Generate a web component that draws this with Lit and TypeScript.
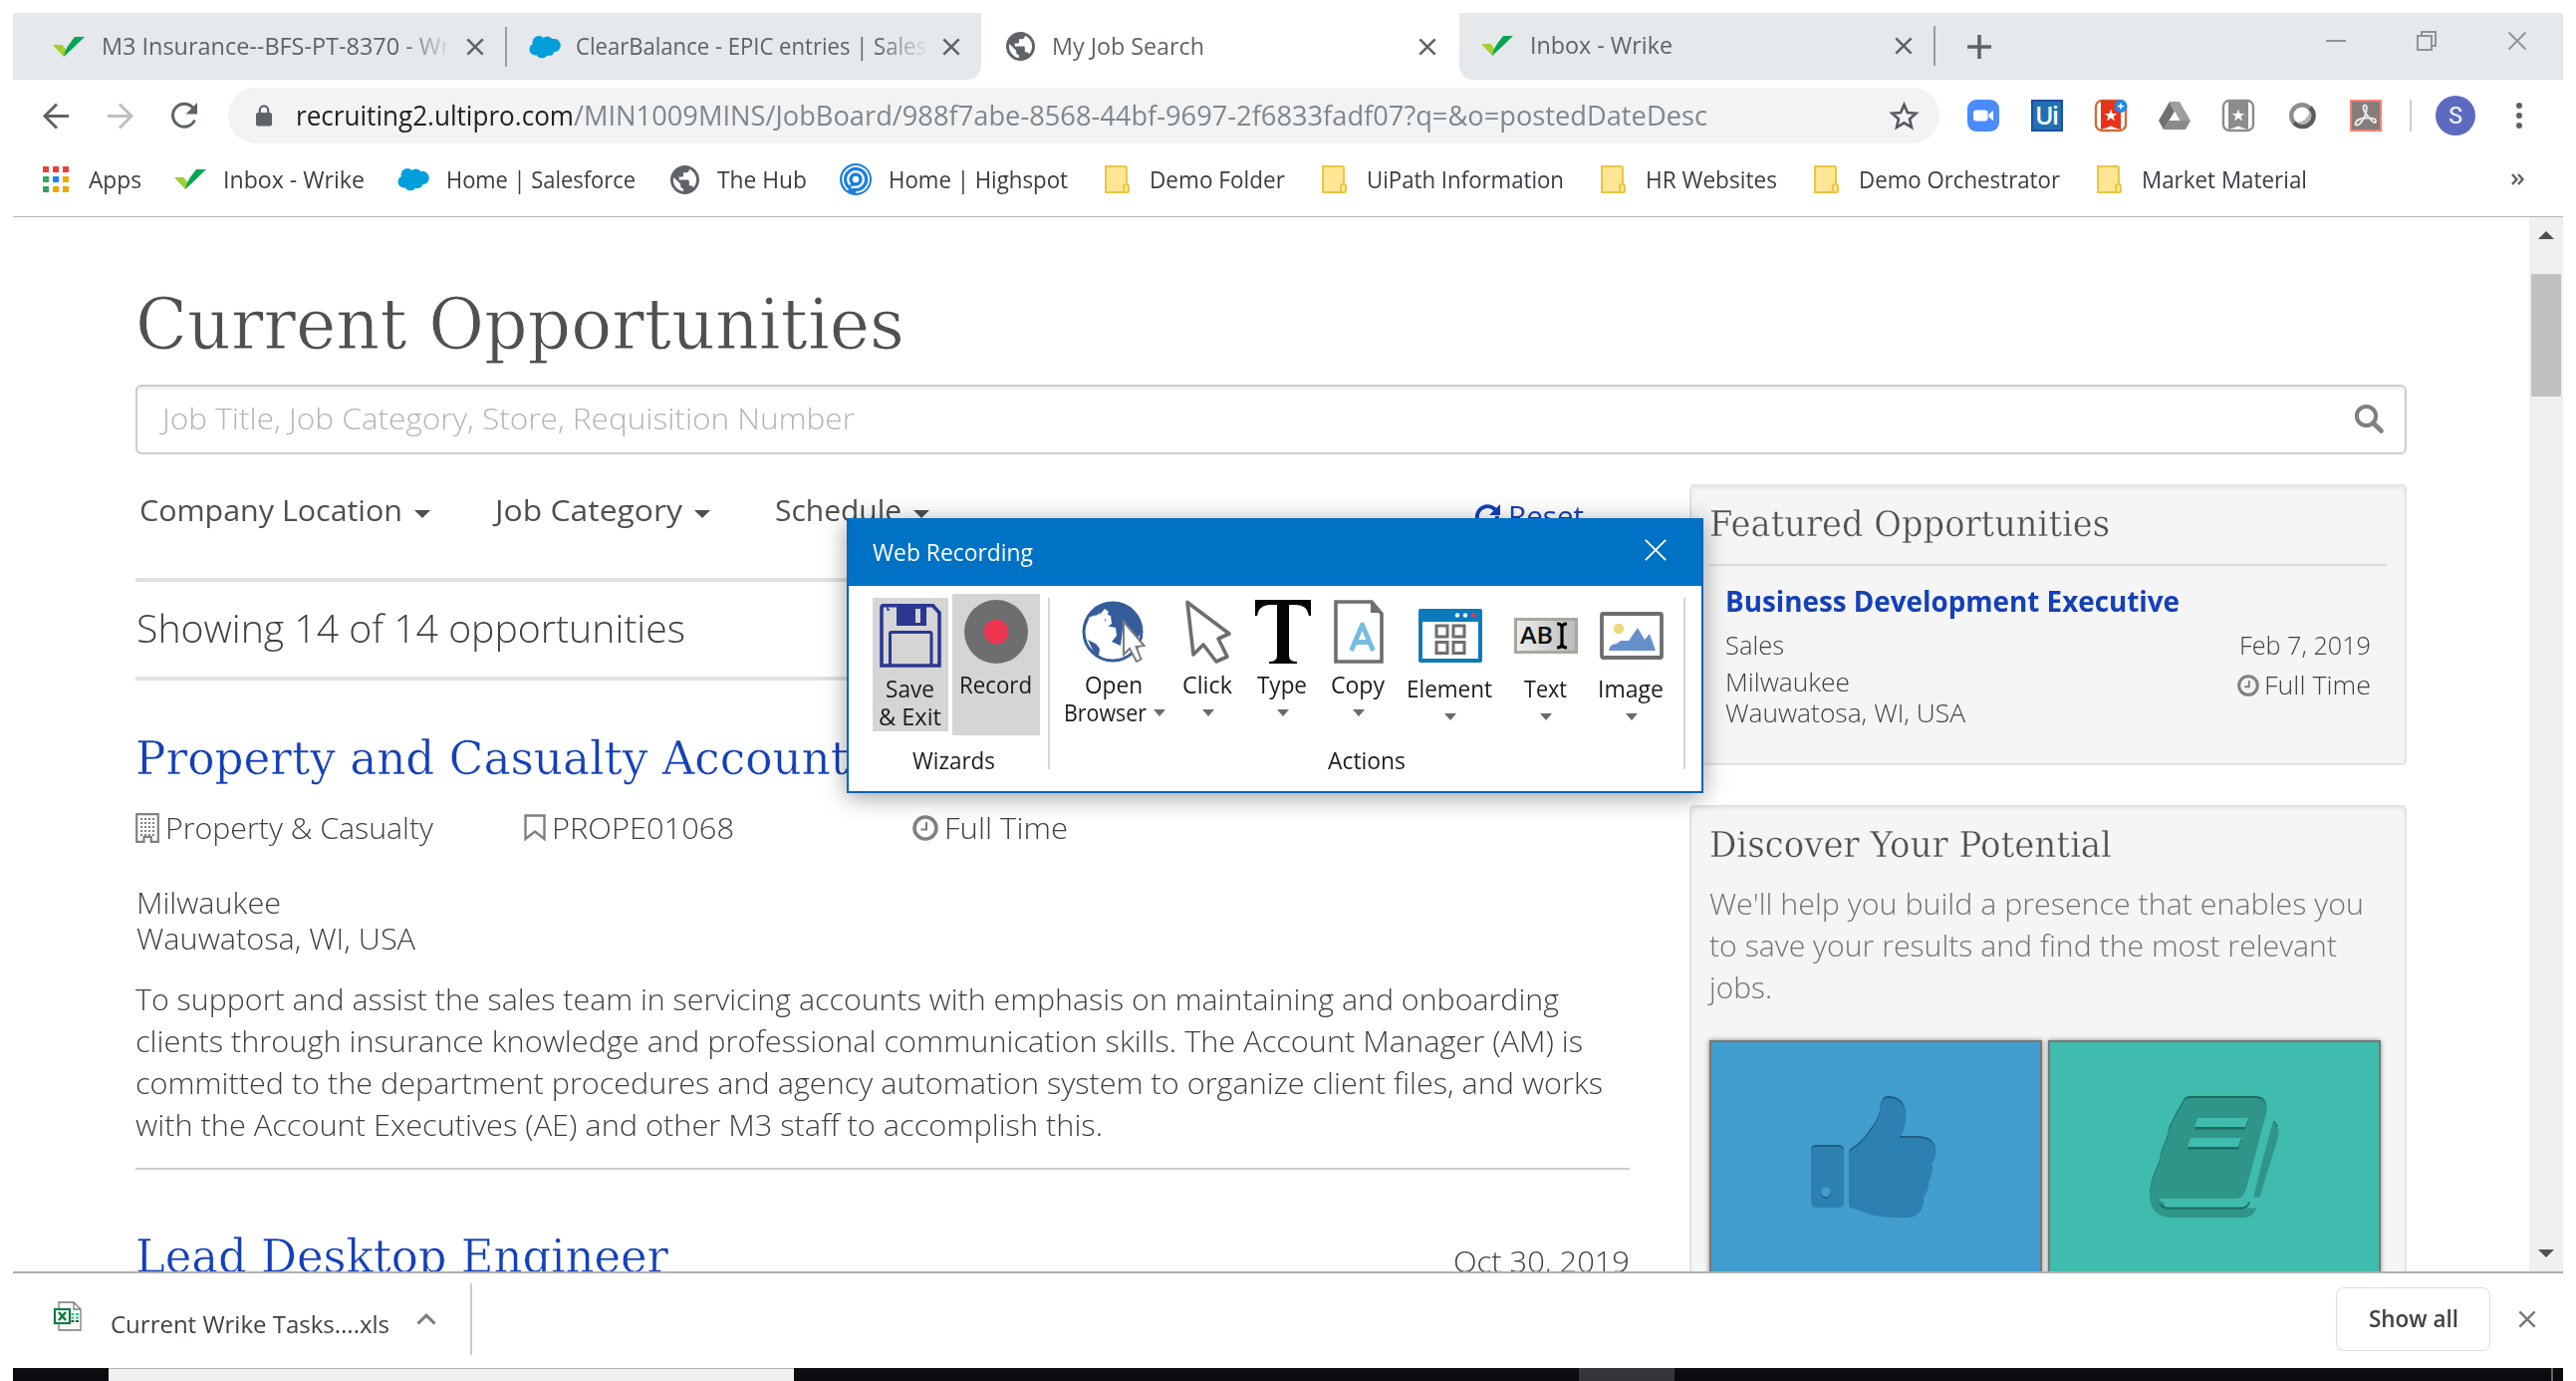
import { LitElement, html, css, svg, nothing } from "lit";
import { customElement } from "lit/decorators.js";
import { styleMap } from "lit/directives/style-map.js";

/* ---------- one line of text condensed or expanded to a set width ---------- */
@customElement("fit-line")
class FitLine extends LitElement {
  static properties = { w: { type: Number } };
  declare w: number;
  static styles = css`
    :host { display: block; white-space: nowrap; flex: none; }
    .line { display: inline-block; transform-origin: 0 50%; white-space: pre; }
  `;
  render() {
    return html`<span class="line"><slot></slot></span>`;
  }
  private fit() {
    const line = this.renderRoot.querySelector<HTMLElement>(".line");
    if (!line) return;
    line.style.transform = "none";
    const natural = line.getBoundingClientRect().width;
    if (natural > 0) line.style.transform = `scaleX(${this.w / natural})`;
    this.style.width = `${this.w}px`;
  }
  updated() {
    this.fit();
    document.fonts.ready.then(() => this.fit());
  }
}

/* ------------------------------- icons ------------------------------- */
const icon = (w: number, h: number, vb: string, body: unknown) =>
  html`<svg width=${w} height=${h} viewBox=${vb} fill="none" style="display:block;flex:none;overflow:visible">${body}</svg>`;

const wrike = () => icon(32, 22, "0 0 32 22", svg`
  <path d="M0 9h9.500l5 6.500L11 21Z" fill="#a4cf30"/><path d="M22 1h10L18 14.500Q15 17 11 21Q12.500 13.500 16 9Z" fill="#00a651"/>`);
const cloud = () => icon(32, 24, "0 0 32 24", svg`
  <g fill="#009edb"><circle cx="10" cy="7.500" r="6.500"/><circle cx="18.500" cy="7" r="5.500"/><circle cx="25" cy="10.500" r="6.800"/><circle cx="6.500" cy="14.500" r="6"/><circle cx="13" cy="17" r="6.300"/><circle cx="20" cy="15.500" r="5.500"/></g>`);
const GLOBE = "M12 2C6.480 2 2 6.480 2 12s4.480 10 10 10 10-4.480 10-10S17.520 2 12 2zm-1 17.930c-3.950-.490-7-3.850-7-7.930 0-.620.080-1.210.210-1.790L9 15v1c0 1.100.9 2 2 2v1.930zm6.900-2.540c-.260-.810-1-1.390-1.900-1.390h-1v-3c0-.550-.450-1-1-1H8v-2h2c.550 0 1-.450 1-1V7h2c1.100 0 2-.9 2-2v-.410c2.930 1.190 5 4.060 5 7.410 0 2.080-.8 3.970-2.100 5.390z";
const globe = () => icon(29, 29, "2 2 20 20", svg`<path d=${GLOBE} fill="#5f6368"/>`);
const highspot = () => icon(32, 32, "0 0 32 32", svg`
  <circle cx="16" cy="16" r="16" fill="#1b7fdc"/>
  <path d="M8.500 26.500a13 13 0 1 1 7.500 2.500" stroke="#fff" stroke-width="1.700"/>
  <path d="M10.500 21.500a7.800 7.800 0 1 1 5.500 2.300h-4.500" stroke="#fff" stroke-width="2.200"/>
  <circle cx="16" cy="16" r="3.200" fill="#fff"/>`);
const folder = () => icon(25, 28, "0 0 25 28", svg`
  <path d="M1 1h19.500q1.500 0 1.500 1.500V19q2 0 2 2v5q0 1-1 1H1Z" fill="#ffe694" stroke="#ecc544" stroke-width="2"/>
  <path d="M19 26v-5q0-2 2-2h1" stroke="#ecc544" stroke-width="2"/>`);
const apps = () => icon(26, 26, "0 0 26 26", svg`
  ${[["#ea4335", "#f33a2c", "#ea4335"], ["#34a853", "#1a82ff", "#f2a600"], ["#34a060", "#f2a600", "#f2a600"]].map(
    (row, r) => row.map((c, i) => svg`<rect x=${i * 10} y=${r * 10} width="6" height="6" fill=${c}/>`))}`);
const cross = (s: number, c: string, w: number) =>
  icon(s, s, "0 0 20 20", svg`<path d="M1.500 1.500l17 17M18.500 1.500l-17 17" stroke=${c} stroke-width=${w}/>`);
const clock = (s: number) => icon(s, s, "0 0 26 26", svg`
  <circle cx="13" cy="13" r="11" stroke="#808080" stroke-width="3.600"/><path d="M14 7v7.500H8.500" stroke="#808080" stroke-width="2.200"/>`);

const back = (c: string, flip = false) => icon(27, 27, "0 0 27 27", svg`
  <path transform=${flip ? "translate(27 0) scale(-1 1)" : ""} d="M26 13.500H3M14 1.500l-12 12 12 12" stroke=${c} stroke-width="3"/>`);
const reload = () => icon(28, 28, "0 0 28 28", svg`
  <path d="M24.500 18.500A11.500 11.500 0 1 1 22.500 6" stroke="#5f6368" stroke-width="3"/><path d="M27 1v11.500H15.500Z" fill="#5f6368"/>`);
const lock = () => icon(18, 22, "0 0 18 22", svg`
  <rect x="1" y="8" width="16" height="13.500" rx="2" fill="#5f6368"/><path d="M4.800 9V5.500a4.200 4.200 0 0 1 8.400 0V9" stroke="#5f6368" stroke-width="2.200"/>`);
const star = () => icon(29, 28, "0 0 29 28", svg`
  <path d="M14.500 3l3.400 8 8.600.7-6.500 5.700 2 8.400-7.500-4.500L7 25.800l2-8.400-6.500-5.700 8.600-.7Z" stroke="#54585d" stroke-width="2.600"/>`);

const extZoom = () => icon(32, 32, "0 0 32 32", svg`
  <rect width="32" height="32" rx="9" fill="#4a8cff"/><rect x="6" y="10.500" width="14.500" height="11" rx="3" fill="#fff"/><path d="M21.500 14.500l4.500-3.500v10l-4.500-3.500Z" fill="#fff"/>`);
const extUi = () => icon(32, 32, "0 0 32 32", svg`
  <rect x="1" y="1" width="30" height="30" fill="#2070b4" stroke="#1e4fa0" stroke-width="2"/>
  <text x="16" y="25" text-anchor="middle" font-family="Open Sans, sans-serif" font-weight="600" font-size="25" textLength="24" fill="#fff">Ui</text>`);
const STAR = "M16 9.500l1.600 4.400h4.700l-3.700 2.800 1.300 4.500-3.900-2.700-3.900 2.700 1.300-4.500-3.700-2.800h4.700Z";
const extStar = (edge: string, fill: string, plus: boolean) => icon(33, 32, "0 0 33 32", svg`
  <rect x="1" y="1" width="30" height="30" rx="6" fill="#fff" stroke=${edge} stroke-width="2.400"/>
  <path d="M6 1h20v29l-5-1.500-5-2-5 2L6 30Z" fill=${fill}/><path d=${STAR} fill="#fff"/>
  ${plus ? svg`<circle cx="26" cy="6.500" r="6.500" fill="#1e88e5"/><path d="M26 3.500v6M23 6.500h6" stroke="#fff" stroke-width="1.400"/>` : nothing}`);
const extDrive = () => icon(32, 28, "0 0 32 28", svg`
  <path d="M11 0L0 19l5 9 11-18Z" fill="#707070"/><path d="M11 0h10l11 19H21Z" fill="#9e9e9e"/><path d="M10.500 19H32l-5 9H5Z" fill="#8b8b8b"/><path d="M16 10l5.500 9h-11Z" fill="#fff"/>`);
const extRing = () => icon(28, 28, "0 0 28 28", svg`
  <circle cx="14" cy="14" r="10.800" stroke="#8d8d8d" stroke-width="4.400"/><path d="M22 6a11 11 0 1 1-16 15" stroke="#5c5c5c" stroke-width="4.400"/>
  <path d="M22 9a9 9 0 0 1-13 12q10-1 13-12Z" fill="#b5b5b5"/>`);
const extPdf = () => icon(32, 32, "0 0 32 32", svg`
  <rect x="1" y="1" width="30" height="30" fill="#857d7c" stroke="#fb8072" stroke-width="2"/>
  <path d="M14.500 17.500Q18 9 16.500 6.500T13.500 7Q13 11 19.500 18.500T26 21.500Q26.500 18 16 18.500T5.500 25Q9 28 14.500 17.500Z" stroke="#eee" stroke-width="1.800"/>`);
const excel = () => icon(28, 30, "0 0 28 30", svg`
  <path d="M5 1h15l7 7v21H5Z" fill="#fff" stroke="#7a7a7a" stroke-width="1.300"/><path d="M20 1v7h7" stroke="#7a7a7a" stroke-width="1.300"/>
  <rect x="1" y="8" width="15" height="14" fill="#fff" stroke="#107c41" stroke-width="2.200"/><path d="M5 11l7 8M12 11l-7 8" stroke="#107c41" stroke-width="2.600"/>
  <path d="M17.500 13h3m1.500 0h3M17.500 16.500h3m1.500 0h3" stroke="#33c481" stroke-width="2"/><path d="M17.500 20h3m1.500 0h3" stroke="#185c37" stroke-width="2"/>`);

const magnifier = () => icon(30, 30, "0 0 30 30", svg`
  <circle cx="12.500" cy="12.500" r="9.600" stroke="#808080" stroke-width="4"/><path d="M19.500 19.500l8 8" stroke="#808080" stroke-width="4.600" stroke-linecap="round"/>`);
const refresh = () => icon(27, 26, "0 0 27 26", svg`
  <path d="M3 15A10.500 10.500 0 0 1 21 6.500" stroke="#1440b8" stroke-width="4"/><path d="M26 1v11H15Z" fill="#1440b8"/><path d="M23 13a10.500 10.500 0 0 1-18 7" stroke="#1440b8" stroke-width="4"/>`);
const building = () => icon(24, 30, "0 0 24 30", svg`
  <path d="M1.200 1.200h21.600v27.600h-7V24H8.500v4.800H1.200Z" stroke="#808080" stroke-width="2.200"/>
  ${[5, 9, 13, 17, 21].map((y) => [5, 9, 13, 17].map((x) => svg`<rect x=${x} y=${y} width="2" height="2" fill="#808080"/>`))}`);
const bookmark = () => icon(22, 27, "0 0 22 27", svg`<path d="M1.500 1.500h19v23.500L11 17.500 1.500 25Z" stroke="#808080" stroke-width="2.400"/>`);

const THUMB = "M38 57q0-4 4-6 8-4 16-16 8-9 11-20 1-15 8-15 18 0 18 19 0 12-6 21h19q17 1 17 15 0 7-4 11 2 10-3 18 1 9-5 15 1 21-18 21H82q-18 0-33-7-5-2-8-2-3-1-3-4Z";
const thumb = () => icon(127, 124, "0 -1 127 124", svg`
  <g fill="#215d80" transform="translate(0 -1)"><path d=${THUMB}/><rect y="49" width="33" height="60" rx="5"/></g>
  <g fill="#2d81b0" transform="translate(0 1)"><path d=${THUMB}/><rect y="49" width="33" height="61" rx="5"/></g>
  <circle cx="15" cy="97" r="5" fill="#215d80"/><circle cx="15" cy="95.500" r="4.800" fill="#419ecf"/>`);
const COVER = "M34 4q1-4 7-4h66q12 1 10 15L97 91q-3 10-11 10H12L0 96l2-12 8-20 1-7 7-18 1-7 8-16Z";
const book = () => icon(131, 124, "0 -1 131 124", svg`
  <path d="M123 25q8 4 6 15l-22 72q-4 9-12 9H20Q-1 119 0 96l4-10 120-61Z" fill="#2f9588"/>
  <path d="M124 24q3 2 4 6" stroke="#1f6a60" stroke-width="1.500"/>
  <path d="M120 12L99 99q-2 7-9 7H15l100 0" stroke="#3fbcad" stroke-width="11"/>
  <path d="M10 107q3 4.500 8 4.500h74q6 0 8-6" stroke="#1f6a60" stroke-width="1.800"/>
  <path d="M112 0q12 1 12 24L103 100l-7 6H20Q8 106 10 101h76Z" fill="#3fbcad"/>
  <path d=${COVER} fill="#1f6a60" transform="translate(0 -1)"/><path d=${COVER} fill="#2f9588" transform="translate(0 1)"/>
  <g fill="#1f6a60" transform="translate(0 1.500)"><path d="M48 21h51l-3 10H45Z"/><path d="M41 41h51l-3 10H38Z"/></g>
  <g fill="#3fbcad"><path d="M48 21h51l-3 9H45Z"/><path d="M41 41h51l-3 9H38Z"/></g>`);

const floppy = () => icon(62, 64, "0 0 62 64", svg`
  <path d="M3 1.700h50.500L60 9v53H2V3Z" stroke="#2a3890" stroke-width="3.600"/><path d="M17 2h30v20H17Z" fill="#2a3890"/><rect x="36" y="5" width="5" height="14" fill="#d5d5d5"/>
  <path d="M10.500 62V30q0-1.500 1.500-1.500h38.500q1.500 0 1.500 1.500v32" stroke="#2a3890" stroke-width="3"/><path d="M8 2v4h2" stroke="#2a3890" stroke-width="1.500"/>`);
const record = () => icon(64, 64, "0 0 64 64", svg`<circle cx="32" cy="32" r="32" fill="#6d6e70"/><circle cx="32" cy="32" r="12.300" fill="#ee3650"/>`);
const openBrowser = () => icon(64, 64, "0 0 64 64", svg`
  <circle cx="31" cy="32" r="29" fill="#fff" stroke="#355d9c" stroke-width="3"/>
  <path d="M8 16Q16 2 31 2q18 1 26 15l3 14-4 8-5-6-9-11-3 24-9-4 5-6-1-8-10-2-1-6 4-8-4-3-5 6-7 1-6 3-1 9-2 5Z" fill="#355d9c"/>
  <path d="M6 40l8 4 4 5-1 7 6 5-9-4Z" fill="#355d9c"/>
  <path d="M13 18l5-5 1 4-4 5ZM23 14l6 2 1 8-7 5-3-3 4-5Z" fill="#fff"/>
  <path d="M42 22v33l6-6 7 13 4.500-2.500-5-12.500 8-1Z" fill="#fff" stroke="#7c7d80" stroke-width="2"/>`);
const click = () => icon(48, 64, "0 0 48 64", svg`
  <path d="M3 2.500L9 55l10-10 13 17 11-5-9-18 11-5Z" stroke="#6d6e70" stroke-width="3.600" stroke-linejoin="round" fill="#fff"/>`);
const typeT = () => icon(56, 64, "0 0 56 64", svg`
  <path d="M0 0h56v16h-2q-2-11-13-11h-7v51q0 6 8 6v2H14v-2q8 0 8-6V5h-7Q4 5 2 16H0Z" fill="#050505"/>`);
const copy = () => icon(50, 64, "0 0 50 64", svg`
  <path d="M2 2h36l10 12v48H2Z" fill="#fff" stroke="#6d6e70" stroke-width="3.600"/><path d="M37 1v12h12Z" fill="#6d6e70"/>
  <path d="M17.500 51L28.500 25l11 26M21.500 42.500h14" stroke="#74bce0" stroke-width="4.800" stroke-linejoin="round"/>`);
const element = () => icon(64, 54, "0 0 64 54", svg`
  <rect width="64" height="54" rx="2" fill="#0c7bbb"/><rect x="4" y="13" width="56" height="37" fill="#fff"/>
  <circle cx="39" cy="6.500" r="2.200" fill="#fff"/><circle cx="47" cy="6.500" r="2.200" fill="#fff"/><circle cx="55" cy="6.500" r="2.300" fill="#ee3650"/>
  ${[[18, 17], [35, 17], [18, 33.500], [35, 33.500]].map(([x, y]) => svg`<rect x=${x} y=${y} width="11" height="11" stroke="#6d6e70" stroke-width="3"/>`)}`);
const textIcon = () => icon(64, 36, "0 0 64 36", svg`
  <defs><linearGradient id="tg"><stop offset="0" stop-color="#eee"/><stop offset="1" stop-color="#bbb"/></linearGradient></defs>
  <rect x="1.500" y="1.500" width="61" height="33" fill="url(#tg)" stroke="#a8a79d" stroke-width="3"/>
  <text x="6" y="26" font-family="Open Sans, sans-serif" font-weight="600" font-size="24" textLength="33" lengthAdjust="spacingAndGlyphs" fill="#111">AB</text>
  <path d="M43 6q5 0 5 4v16q0 4-5 4M53 6q-5 0-5 4v16q0 4 5 4" stroke="#050505" stroke-width="3.200"/>`);
const image = () => icon(64, 48, "0 0 64 48", svg`
  <rect x="2" y="2" width="60" height="44" rx="1.500" fill="#fff" stroke="#6d6e70" stroke-width="3.800"/>
  <circle cx="19" cy="17" r="5.200" fill="#ecd97c"/><path d="M9 39q1-7 8-7l4-3h8l9-13 7 12 5-6 6 17Z" fill="#6690ca"/>`);

/* ------------------------------- data ------------------------------- */
const bookmarks: [() => unknown, string, number][] = [
  [apps, "Apps", 53], [wrike, "Inbox - Wrike", 142], [cloud, "Home | Salesforce", 190], [globe, "The Hub", 90],
  [highspot, "Home | Highspot", 180], [folder, "Demo Folder", 136], [folder, "UiPath Information", 198],
  [folder, "HR Websites", 132], [folder, "Demo Orchestrator", 202], [folder, "Market Material", 166],
];
const description: [string, number][] = [
  ["To support and assist the sales team in servicing accounts with emphasis on maintaining and onboarding", 1429],
  ["clients through insurance knowledge and professional communication skills. The Account Manager (AM) is", 1453],
  ["committed to the department procedures and agency automation system to organize client files, and works", 1473],
  ["with the Account Executives (AE) and other M3 staff to accomplish this.", 971],
];
interface Action { icon: () => unknown; label: [string, number]; second?: [string, number]; col: number; low?: boolean }
const actions: Action[] = [
  { icon: openBrowser, label: ["Open", 58], second: ["Browser", 83], col: 106 },
  { icon: click, label: ["Click", 50], col: 82 },
  { icon: typeT, label: ["Type", 50], col: 68 },
  { icon: copy, label: ["Copy", 54], col: 84 },
  { icon: element, label: ["Element", 86], col: 100, low: true },
  { icon: textIcon, label: ["Text", 43], col: 92, low: true },
  { icon: image, label: ["Image", 66], col: 80, low: true },
];

/* ----------------------------- recorder ----------------------------- */
@customElement("web-recorder")
class WebRecorder extends LitElement {
  static styles = css`
    :host {
      display: block; box-sizing: border-box; width: 860px; height: 276px; background: #fff;
      border: 2px solid #0066b4; border-top: 0; box-shadow: 0 4px 22px rgba(0, 0, 0, 0.38);
      font: 23px/28px "Open Sans", "Noto Sans", sans-serif; color: #1c1c1c;
    }
    .title { height: 68px; box-sizing: border-box; background: #0072c6; color: #fff; display: flex; align-items: center; justify-content: space-between; padding: 0 34px 4px 24px; font-size: 23.500px; }
    .title fit-line { padding-top: 3px; }
    .body { display: flex; padding-top: 8px; }
    .group { display: flex; flex-direction: column; }
    .tools { display: flex; height: 142px; }
    .wizards { padding: 0 8px 0 24px; gap: 4px; }
    .caption { display: flex; justify-content: center; height: 28px; margin-top: 11px; }
    .w { padding-left: 11px; }
    .divider { width: 2px; height: 172px; background: #d4d4d4; margin-top: 4px; }
    .big { background: #d5d5d5; display: flex; flex-direction: column; align-items: center; box-sizing: border-box; }
    .save { width: 76px; height: 134px; margin-top: 4px; padding-top: 6px; }
    .record { width: 88px; height: 142px; padding-top: 6px; }
    .big fit-line:first-of-type { margin-top: 7px; }
    .big fit-line, .action fit-line { position: relative; left: -1px; }
    .actions { padding-left: 12px; padding-right: 12px; }
    .action { display: flex; flex-direction: column; align-items: center; padding-top: 6px; flex: none; box-sizing: border-box; }
    .action:first-child .pic { margin-left: -2px; }
    .pic { height: 64px; display: flex; align-items: center; justify-content: center; margin-bottom: 7px; }
    .low .pic { align-items: center; padding-top: 4px; }
    .second { display: flex; align-items: center; gap: 6px; height: 28px; }
    .caret { width: 0; border: 6px solid transparent; border-top: 7px solid #6a6a6a; border-bottom: 0; }
  `;
  render() {
    return html`
      <div class="title"><fit-line w="161">Web Recording</fit-line>${cross(24, "#fff", 1.5)}</div>
      <div class="body">
        <div class="group">
          <div class="tools wizards">
            <div class="big save">${floppy()}<fit-line w="49">Save</fit-line><fit-line w="63">&amp; Exit</fit-line></div>
            <div class="big record">${record()}<fit-line w="73">Record</fit-line></div>
          </div>
          <div class="caption w"><fit-line w="83">Wizards</fit-line></div>
        </div>
        <div class="divider"></div>
        <div class="group">
          <div class="tools actions">
            ${actions.map((a) => html`
              <div class="action ${a.low ? "low" : ""}" style=${styleMap({ width: `${a.col}px` })}>
                <div class="pic">${a.icon()}</div>
                <fit-line w=${a.label[1]}>${a.label[0]}</fit-line>
                <div class="second">${a.second ? html`<fit-line w=${a.second[1]}>${a.second[0]}</fit-line>` : nothing}<span class="caret"></span></div>
              </div>`)}
          </div>
          <div class="caption"><fit-line w="78">Actions</fit-line></div>
        </div>
        <div class="divider"></div>
      </div>`;
  }
}

/* ------------------------------- page ------------------------------- */
@customElement("app-root")
class AppRoot extends LitElement {
  static styles = css`
    :host { display: block; width: 2586px; height: 1386px; overflow: hidden; background: #fff; font-family: "Open Sans", "Noto Sans", sans-serif; }
    * { box-sizing: border-box; }
    .frame { position: relative; display: flex; flex-direction: column; height: 1386px; padding: 13px 13px 0; }
    .row { display: flex; align-items: center; }

    .tabs { display: flex; height: 67px; background: #e5e9ec; color: #5f6367; font-size: 23.500px; flex: none; }
    .tab { display: flex; align-items: center; height: 67px; }
    .tab .name { overflow: hidden; padding-bottom: 2px; }
    .fade { -webkit-mask-image: linear-gradient(90deg, #000 86%, transparent 101%); mask-image: linear-gradient(90deg, #000 86%, transparent 101%); }
    .t1 { width: 496px; padding-left: 40px; border-right: 2px solid #9a9da0; height: 40px; }
    .t2 { width: 476px; padding: 0 21px 0 22px; }
    .t3 { width: 480px; background: #fff; padding: 0 23px 0 25px; border-radius: 16px 16px 0 0; }
    .t4 { width: 478px; padding: 0 21px 0 22px; border-right: 2px solid #9a9da0; height: 40px; margin-top: 13px; }
    .t1 .name { margin-left: 17px; } .t1 svg:last-child { margin-left: 16px; }
    .t2 .name { margin: 0 16px 0 15px; }
    .t3 .name, .t4 .name { margin-left: 17px; flex: 1; }
    .plus { display: flex; align-items: center; margin-left: 32px; }
    .win { margin-left: auto; display: flex; gap: 71px; padding: 18px 36px 0 0; }
    .wrap { display: flex; background: #fff; }
    .rest { flex: 1; }
    .left { background: #e5e9ec; border-radius: 0 0 14px 0; }
    .right { background: #e5e9ec; border-radius: 0 0 0 14px; flex: 1; display: flex; }

    .bar { height: 71px; flex: none; padding: 8px 0 0 30px; color: #80868b; align-items: flex-start; }
    .nav { display: flex; gap: 37px; align-items: center; width: 186px; height: 56px; }
    .omni { width: 1718px; height: 56px; border-radius: 28px; background: #f1f3f4; display: flex; align-items: center; padding: 0 21px 0 27px; font-size: 27px; }
    .omni fit-line { padding-bottom: 1px; }
    .omni .host { color: #202124; margin-left: 23px; }
    .omni svg:last-child { margin-left: auto; }
    .ext { display: flex; align-items: center; gap: 32px; margin-left: 28px; height: 56px; }
    .cell { width: 32px; display: flex; justify-content: center; flex: none; }
    .sep { width: 2px; height: 32px; background: #ccc; margin: 0 -4px 0 -4px; }
    .avatar { width: 40px; height: 40px; border-radius: 50%; background: #5c6bc0; color: #fff; display: flex; align-items: center; justify-content: center; font: 23px Roboto, sans-serif; margin-left: -4px; flex: none; }
    .dots { display: flex; flex-direction: column; gap: 4px; margin-left: 9px; }
    .dots i { width: 6px; height: 6px; border-radius: 50%; background: #5f6368; }

    .marks { height: 67px; padding: 13px 39px 0 27px; gap: 33px; font-size: 23.500px; color: #3a3d41; flex: none; border-bottom: 1px solid #b4b4b4; align-items: flex-start; }
    .mark { display: flex; gap: 17px; align-items: center; height: 32px; }
    .mark .cell { height: 32px; align-items: center; }
    .mark fit-line { padding-bottom: 1px; }
    .more { margin-left: auto; height: 32px; display: flex; align-items: center; }

    .view { height: 1058px; display: flex; overflow: hidden; flex: none; }
    .page { width: 2526px; padding-left: 123px; color: #3f3f3f; font-size: 28.500px; font-weight: 300; }
    .scroll { width: 34px; background: #f0f0f0; display: flex; flex-direction: column; align-items: center; padding: 14px 0; }
    .up, .down { width: 0; border: 8px solid transparent; }
    .up { border-bottom-color: #505050; border-top: 0; }
    .down { border-top-color: #505050; border-bottom: 0; margin-top: auto; }
    .thumb { width: 30px; height: 123px; background: #c1c1c1; margin-top: 35px; }

    .slab { font-family: "DejaVu Serif", serif; font-weight: 400; }
    h1, h2, h3, p { margin: 0; font-weight: inherit; }
    h1.slab { font-size: 71px; line-height: 121px; padding-top: 47px; height: 168px; color: #505050; -webkit-text-stroke: 0.900px #fff; }
    .search { width: 2280px; height: 70px; border: 2px solid #ccc; border-radius: 6px; box-shadow: inset 0 2px 3px rgba(0, 0, 0, 0.08); display: flex; align-items: center; justify-content: space-between; padding: 0 21px 3px 25px; color: #b4b4b4; }
    .columns { display: flex; gap: 60px; }
    .main { width: 1500px; }
    .filters { height: 112px; display: flex; align-items: center; padding-left: 4px; font-weight: 400; color: #4f4f4f; }
    .filters .caret { width: 0; border: 8px solid transparent; border-top: 8px solid #4f4f4f; border-bottom: 0; margin: 7px 65px 0 12px; }
    .reset { display: flex; align-items: center; gap: 7px; margin-left: auto; color: #1440b8; padding: 12px 46px 0 0; }
    .count { height: 103px; margin-top: 12px; border: solid #e1e1e1; border-width: 4px 0; font-size: 38px; display: flex; align-items: center; padding: 0 0 3px 1px; }
    .job h2 { color: #1440b8; font-size: 46.500px; line-height: 43px; margin-top: 57px; -webkit-text-stroke: 0.500px #fff; }
    .meta { display: grid; grid-template-columns: 390px 390px 1fr; height: 95px; align-items: center; }
    .meta .row { gap: 6px; }
    .place { line-height: 36px; margin: 10px 0 22px 1px; }
    .desc { line-height: 42px; padding-bottom: 22px; border-bottom: 2px solid #ccc; }
    .next { display: flex; justify-content: space-between; align-items: center; height: 43px; margin-top: 66px; }
    .job .next h2 { margin: 0; }
    .next .date { padding-top: 9px; }

    .side { width: 720px; padding-top: 30px; }
    .card { background: #f5f5f5; border: 2px solid #e3e3e3; border-radius: 5px; box-shadow: inset 0 2px 3px rgba(0, 0, 0, 0.05); padding: 0 18px; }
    .card h3 { height: 76px; line-height: 76px; font-size: 34.500px; -webkit-text-stroke: 0.400px #f5f5f5; color: #505050; }
    .featured { height: 282px; margin-bottom: 40px; }
    .featured h3 { height: 80px; border-bottom: 2px solid #dcdcdc; }
    .post { padding: 7px 16px 0 16px; font-size: 25px; line-height: 31px; }
    .post .name { font-size: 28.500px; line-height: 57px; font-weight: 700; color: #1440b8; }
    .post .cols { display: flex; justify-content: space-between; }
    .gap { margin-bottom: 6px; }
    .right-col { display: flex; flex-direction: column; align-items: flex-end; gap: 9px; }
    .right-col .row { gap: 5px; }
    .discover { height: 700px; }
    .discover p { line-height: 42px; color: #727272; }
    .tiles { display: flex; gap: 6px; margin-top: 32px; }
    .tile { width: 334px; height: 300px; border: 2px solid #777; box-shadow: 0 0 5px rgba(0, 0, 0, 0.45); padding: 54px 0 0 100px; }
    .blue { background: #419ecf; } .teal { background: #3fbcad; }

    .shelf { height: 97px; flex: none; border-top: 2px solid #b0b0b0; display: flex; align-items: center; padding: 0 27px 3px 41px; font-size: 24px; color: #3e4145; }
    .shelf .file { margin: 8px 27px 0 29px; }
    .shelf .rule { width: 2px; height: 72px; background: #ccc; margin: 0 auto 0 34px; }
    .shelf .xls { margin-bottom: 6px; }
    .all { width: 155px; height: 64px; border: 1.500px solid #dadce0; border-radius: 8px; display: flex; align-items: center; justify-content: center; font-weight: 600; margin-right: 28px; font-size: 23px; padding-bottom: 2px; }
    .task { height: 13px; display: flex; flex: none; background: #0a0c10; }
    .task i { display: block; height: 13px; }
    .k1 { width: 96px; } .k2 { width: 688px; background: #f0f0f0; border-top: 1px solid #b4b4b4; } .k3 { width: 788px; } .k4 { width: 96px; background: #33353a; } .k5 { width: 882px; border-right: 2px solid #666; }

    .recorder { position: absolute; left: 850px; top: 520px; }
  `;

  render() {
    const grey = "#5f6368";
    return html`
      <div class="frame">
        <div class="tabs">
          <div class="wrap">
            <div class="left row">
              <div class="tab t1">${wrike()}<div class="name fade"><fit-line w="350">M3 Insurance--BFS-PT-8370 - Wr</fit-line></div>${cross(18, grey, 2.9)}</div>
              <div class="tab t2">${cloud()}<div class="name fade"><fit-line w="352">ClearBalance - EPIC entries | Sales</fit-line></div>${cross(18, grey, 2.9)}</div>
            </div>
            <div class="tab t3">${globe()}<div class="name"><fit-line w="153">My Job Search</fit-line></div>${cross(18, grey, 2.9)}</div>
          </div>
          <div class="wrap rest">
            <div class="right">
              <div class="tab t4">${wrike()}<div class="name"><fit-line w="143">Inbox - Wrike</fit-line></div>${cross(18, grey, 2.9)}</div>
              <div class="plus">${icon(24, 24, "0 0 24 24", svg`<path d="M12 0v24M0 12h24" stroke="#5f6368" stroke-width="3.600"/>`)}</div>
              <div class="win">
                ${icon(20, 20, "0 0 20 20", svg`<path d="M0 10h20" stroke="#909396" stroke-width="2"/>`)}
                ${icon(20, 20, "0 0 20 20", svg`<path d="M1 5h14v14H1ZM5 5V1h14v14h-4" stroke="#909396" stroke-width="2"/>`)}
                ${cross(20, "#909396", 1.8)}
              </div>
            </div>
          </div>
        </div>

        <div class="row bar">
          <div class="nav">${back(grey)}${back("#bdbfc2", true)}${reload()}</div>
          <div class="omni">${lock()}<fit-line class="host" w="279">recruiting2.ultipro.com</fit-line><fit-line w="1138">/MIN1009MINS/JobBoard/988f7abe-8568-44bf-9697-2f6833fadf07?q=&amp;o=postedDateDesc</fit-line>${star()}</div>
          <div class="ext">
            ${extZoom()}${extUi()}<div class="cell">${extStar("#c8703a", "#e8321c", true)}</div>${extDrive()}<div class="cell">${extStar("#8c8c8c", "#8c8c8c", false)}</div>
            <div class="cell">${extRing()}</div>${extPdf()}<div class="sep"></div><div class="avatar">S</div>
            <div class="dots"><i></i><i></i><i></i></div>
          </div>
        </div>

        <div class="row marks">
          ${bookmarks.map(([pic, name, w]) => html`<div class="mark"><div class="cell">${pic()}</div><fit-line w=${w}>${name}</fit-line></div>`)}
          <div class="more">${icon(13, 12, "0 0 13 12", svg`<path d="M1 1l4.500 5L1 11M7 1l4.500 5L7 11" stroke="#5f6368" stroke-width="2.400"/>`)}</div>
        </div>

        <div class="view">
          <div class="page">
            <h1 class="slab"><fit-line w="772">Current Opportunities</fit-line></h1>
            <div class="search"><fit-line w="695">Job Title, Job Category, Store, Requisition Number</fit-line>${magnifier()}</div>
            <div class="columns">
              <div class="main">
                <div class="filters">
                  <fit-line w="264">Company Location</fit-line><span class="caret"></span>
                  <fit-line w="188">Job Category</fit-line><span class="caret"></span>
                  <fit-line w="127">Schedule</fit-line><span class="caret"></span>
                  <div class="reset">${refresh()}<fit-line w="76">Reset</fit-line></div>
                </div>
                <div class="count"><fit-line w="551">Showing 14 of 14 opportunities</fit-line></div>
                <div class="job">
                  <h2 class="slab"><fit-line w="716">Property and Casualty Account</fit-line></h2>
                  <div class="meta">
                    <div class="row">${building()}<fit-line w="269">Property &amp; Casualty</fit-line></div>
                    <div class="row">${bookmark()}<fit-line w="183">PROPE01068</fit-line></div>
                    <div class="row">${clock(26)}<fit-line w="124">Full Time</fit-line></div>
                  </div>
                  <div class="place"><fit-line w="145">Milwaukee</fit-line><fit-line w="280">Wauwatosa, WI, USA</fit-line></div>
                  <div class="desc">${description.map(([t, w]) => html`<fit-line w=${w}>${t}</fit-line>`)}</div>
                </div>
                <div class="job">
                  <div class="next"><h2 class="slab"><fit-line w="535">Lead Desktop Engineer</fit-line></h2><fit-line class="date" w="177">Oct 30, 2019</fit-line></div>
                </div>
              </div>
              <div class="side">
                <div class="card featured">
                  <h3 class="slab"><fit-line w="402">Featured Opportunities</fit-line></h3>
                  <div class="post">
                    <div class="name"><fit-line w="456">Business Development Executive</fit-line></div>
                    <div class="cols">
                      <div><fit-line class="gap" w="59">Sales</fit-line><fit-line w="125">Milwaukee</fit-line><fit-line w="241">Wauwatosa, WI, USA</fit-line></div>
                      <div class="right-col"><fit-line w="132">Feb 7, 2019</fit-line><div class="row">${clock(22)}<fit-line w="107">Full Time</fit-line></div></div>
                    </div>
                  </div>
                </div>
                <div class="card discover">
                  <h3 class="slab"><fit-line w="404">Discover Your Potential</fit-line></h3>
                  <p><fit-line w="657">We'll help you build a presence that enables you</fit-line><fit-line w="630">to save your results and find the most relevant</fit-line><fit-line w="63">jobs.</fit-line></p>
                  <div class="tiles"><div class="tile blue">${thumb()}</div><div class="tile teal">${book()}</div></div>
                </div>
              </div>
            </div>
          </div>
          <div class="scroll"><div class="up"></div><div class="thumb"></div><div class="down"></div></div>
        </div>

        <div class="shelf">
          <div class="xls">${excel()}</div><fit-line class="file" w="280">Current Wrike Tasks....xls</fit-line>
          ${icon(20, 12, "0 0 20 12", svg`<path d="M1.500 10.500L10 2l8.500 8.500" stroke="#77797c" stroke-width="3"/>`)}
          <div class="rule"></div>
          <div class="all"><fit-line w="90">Show all</fit-line></div>${cross(18, "#77797c", 2.9)}
        </div>
        <div class="task"><i class="k1"></i><i class="k2"></i><i class="k3"></i><i class="k4"></i><i class="k5"></i></div>
        <web-recorder class="recorder"></web-recorder>
      </div>`;
  }
}
